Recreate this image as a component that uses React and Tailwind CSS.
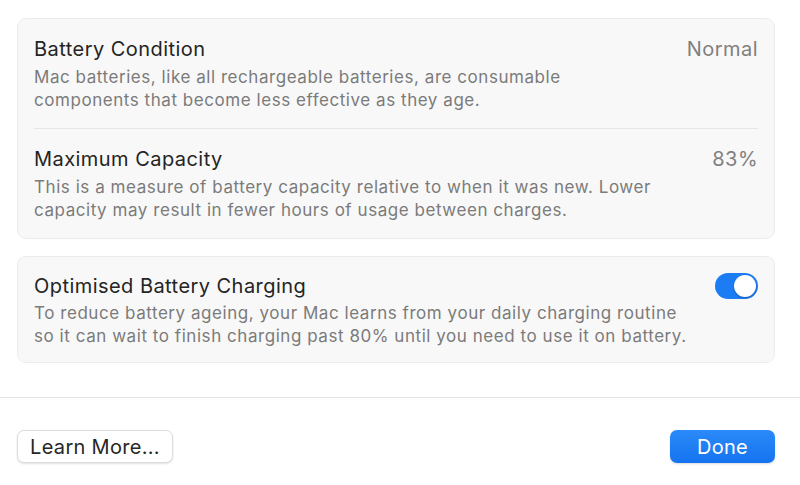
import React, { useState } from "react";

const Row = ({ title, value, children, last }) => (
  <div className={`mx-[16px] pt-[18px] pb-[16px] ${last ? "" : "border-b border-[#e6e6e6]"}`}>
    <div className="flex items-center justify-between">
      <h3 className="text-[20px] leading-[25px] tracking-[0.45px] text-[#242424]">{title}</h3>
      {value}
    </div>
    <p className="mt-[4px] text-[17px] leading-[23px] tracking-[0.55px] text-[#7b7b7b]">{children}</p>
  </div>
);

const Toggle = ({ on, onChange }) => (
  <button
    onClick={() => onChange(!on)}
    className={`relative h-[26px] w-[43px] rounded-full transition ${on ? "bg-[#1c7cf4]" : "bg-[#e2e2e2]"}`}
  >
    <span
      className={`absolute top-[2px] h-[22px] w-[22px] rounded-full bg-white shadow-[0_1px_2px_rgba(0,0,0,0.25)] transition-all ${on ? "left-[19px]" : "left-[2px]"}`}
    ></span>
  </button>
);

export default function App() {
  const [optimised, setOptimised] = useState(true);

  return (
    <div className="h-[485px] w-[800px] overflow-hidden bg-white font-['Inter','Liberation_Sans',sans-serif] antialiased">
      <div className="pl-[17px] pr-[25px] pt-[18px]">
        {/* Battery health card */}
        <div className="rounded-[9px] border border-[#ececec] bg-[#f8f8f8]">
          <Row
            title="Battery Condition"
            value={<span className="text-[20px] leading-[25px] tracking-[0.45px] text-[#808080]">Normal</span>}
          >
            Mac batteries, like all rechargeable batteries, are consumable
            <br />
            components that become less effective as they age.
          </Row>
          <Row
            title="Maximum Capacity"
            value={<span className="text-[20px] leading-[25px] tracking-[0.45px] text-[#808080]">83%</span>}
            last
          >
            This is a measure of battery capacity relative to when it was new. Lower
            <br />
            capacity may result in fewer hours of usage between charges.
          </Row>
        </div>

        {/* Optimised charging card */}
        <div className="mt-[17px] rounded-[9px] border border-[#ececec] bg-[#f8f8f8]">
          <div className="mx-[16px] pt-[16px] pb-[14px]">
            <div className="flex items-center justify-between">
              <h3 className="text-[20px] leading-[25px] tracking-[0.45px] text-[#242424]">Optimised Battery Charging</h3>
              <Toggle on={optimised} onChange={setOptimised} />
            </div>
            <p className="mt-[3px] text-[17px] leading-[23px] tracking-[0.55px] text-[#7b7b7b]">
              To reduce battery ageing, your Mac learns from your daily charging routine
              <br />
              so it can wait to finish charging past 80% until you need to use it on battery.
            </p>
          </div>
        </div>
      </div>

      {/* Footer */}
      <div className="mt-[34px] border-t border-[#e4e4e4] pl-[17px] pr-[25px] pt-[32px]">
        <div className="flex items-center justify-between">
          <button className="h-[33px] w-[156px] rounded-[7px] border border-[#dcdcdc] bg-white text-[20px] tracking-[0.3px] text-[#262626] shadow-[0_1px_2px_rgba(0,0,0,0.12)]">
            Learn More...
          </button>
          <button className="h-[33px] w-[105px] rounded-[7px] bg-gradient-to-b from-[#2b8af8] to-[#1473f0] text-[20px] tracking-[0.3px] text-white shadow-[0_1px_2px_rgba(0,0,0,0.15)]">
            Done
          </button>
        </div>
      </div>
    </div>
  );
}
